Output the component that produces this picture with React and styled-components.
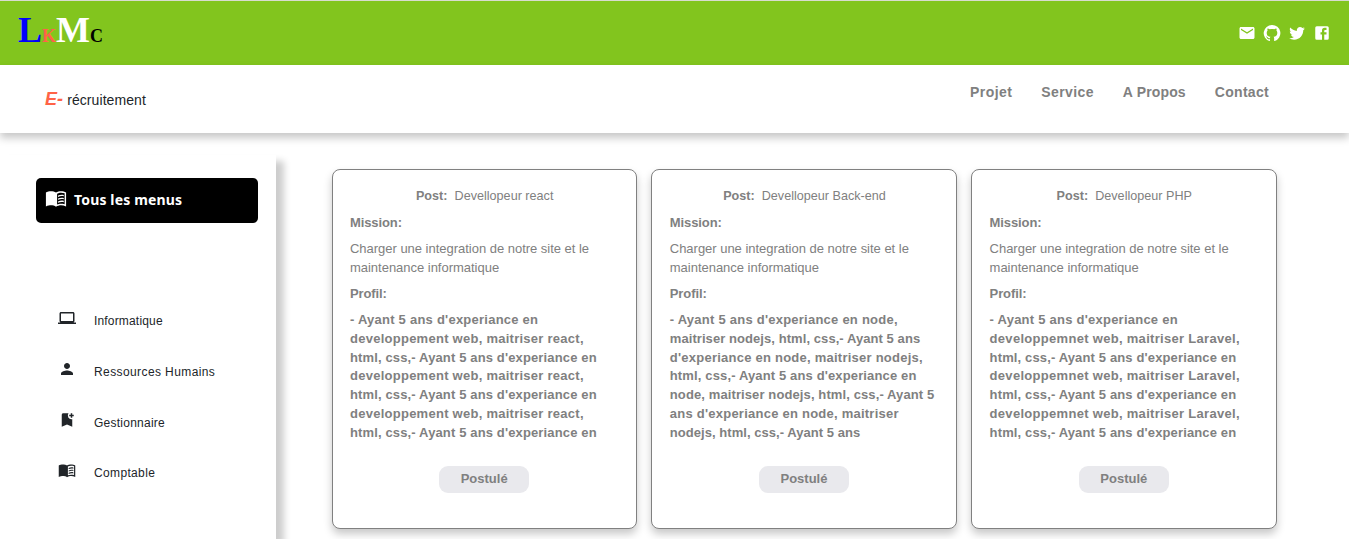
import React from "react";
import styled, { createGlobalStyle } from "styled-components";
import { MdEmail, MdLaptop, MdPerson, MdBookmarkAdd } from "react-icons/md";

const GlobalStyle = createGlobalStyle`
  * { box-sizing: border-box; }
  body {
    margin: 0;
    background: #fff;
    color: #212529;
    font-family: "Liberation Sans", Arial, sans-serif;
  }
`;

const TopBar = styled.div`
  height: 65px;
  border-top: 1px solid #d8dccf;
  background: #82c51e;
  display: flex;
  justify-content: space-between;
  padding: 0 18px;
`;

const Logo = styled.div`
  font-family: "Liberation Serif", "Times New Roman", serif;
  font-weight: 700;
  line-height: 40px;
  padding-top: 9px;
  white-space: nowrap;
`;

const LogoLetter = styled.span`
  font-size: ${(p) => p.$size}px;
  color: ${(p) => p.$color};
`;

const Socials = styled.div`
  display: flex;
  gap: 7px;
  padding-top: 23px;
  color: #fff;
  svg { width: 18px; height: 18px; display: block; fill: currentColor; }
`;

const NavBar = styled.header`
  height: 68px;
  background: #fff;
  box-shadow: 0 5px 8px rgba(0, 0, 0, 0.22);
  display: flex;
  justify-content: space-between;
  padding: 0 80px 0 45px;
`;

const Brand = styled.div`
  font-size: 14px;
  line-height: 24px;
  padding-top: 22px;
  letter-spacing: 0.08px;
`;

const BrandMark = styled.span`
  font-size: 18px;
  font-weight: 700;
  font-style: italic;
  color: tomato;
`;

const Links = styled.nav`
  display: flex;
  gap: 29px;
  padding-top: 17px;
`;

const NavLink = styled.a`
  font-size: 14px;
  line-height: 20px;
  font-weight: 700;
  color: #808080;
  letter-spacing: ${(p) => p.$spacing}px;
`;

const Body = styled.div`
  display: flex;
  align-items: flex-start;
  padding-top: 22px;
`;

const Sidebar = styled.aside`
  width: 276px;
  height: 384px;
  padding: 23px 18px 0 36px;
  background: #fff;
  box-shadow: 8px 6px 7px rgba(0, 0, 0, 0.2);
`;

const MenuButton = styled.div`
  height: 45px;
  border-radius: 5px;
  background: #000;
  color: #fff;
  display: flex;
  padding-left: 9px;
  font: 700 14px/20px "Noto Sans", "Open Sans", sans-serif;
  letter-spacing: 0.15px;
  svg { width: 22px; height: 22px; margin: 9px 7px 0 0; }
  span { padding-top: 12px; }
`;

const MenuList = styled.div`
  padding: 84px 0 0 22px;
`;

const MenuItem = styled.div`
  display: flex;
  height: 50.8px;
  font-size: 12px;
  line-height: 18px;
  letter-spacing: ${(p) => p.$spacing}px;
  svg { width: 18px; height: 18px; margin-right: 18px; margin-top: 2px; }
  span { padding-top: 5px; }
`;

const Cards = styled.main`
  display: flex;
  gap: 14px;
  padding: 14px 0 0 55.6px;
`;

const Card = styled.article`
  width: 305.8px;
  height: 360px;
  border: 1px solid #808080;
  border-radius: 8px;
  background: #fff;
  box-shadow: 0 5px 8px rgba(0, 0, 0, 0.22);
  padding: 17.4px 17px 0 17.4px;
  color: #808080;
  font-size: 13px;
  line-height: 18.8px;
  display: flex;
  flex-direction: column;
  gap: 7.4px;
`;

const Post = styled.div`
  text-align: center;
  white-space: pre;
  font-size: 12.6px;
  letter-spacing: 0.01px;
`;

const Label = styled.div`
  font-weight: 700;
  letter-spacing: -0.1px;
`;

const Mission = styled.div`
  letter-spacing: -0.02px;
  white-space: nowrap;
`;

const Profile = styled.div`
  font-weight: 700;
  white-space: nowrap;
`;

const ProfileLine = styled.div`
  letter-spacing: ${(p) => p.$spacing}px;
`;

const Apply = styled.div`
  align-self: center;
  width: 90px;
  height: 27px;
  margin-top: 16.4px;
  margin-right: 1px;
  border-radius: 9px;
  background: #e9e9ed;
  font-weight: 700;
  line-height: 25px;
  text-align: center;
`;

const GithubIcon = () => (
  <svg viewBox="0 0 24 24">
    <path d="M12 1.27a11 11 0 00-3.48 21.46c.55.09.73-.28.73-.55v-1.84c-3.03.64-3.67-1.46-3.67-1.46-.55-1.29-1.28-1.65-1.28-1.65-.92-.65.1-.65.1-.65 1.1 0 1.73 1.1 1.73 1.1.92 1.65 2.57 1.2 3.21.92a2 2 0 01.64-1.47c-2.47-.27-5.04-1.19-5.04-5.5 0-1.1.46-2.1 1.2-2.84a3.76 3.76 0 010-2.93s.91-.28 3.11 1.1c1.8-.49 3.7-.49 5.5 0 2.1-1.38 3.02-1.1 3.02-1.1a3.76 3.76 0 01.1 2.93c.83.74 1.2 1.74 1.2 2.94 0 4.21-2.57 5.13-5.04 5.4.45.37.82.92.82 2.02v3.03c0 .27.1.64.73.55A11 11 0 0012 1.27" />
  </svg>
);

const TwitterIcon = () => (
  <svg viewBox="0 0 24 24">
    <path d="M22.46 6c-.77.35-1.6.58-2.46.69.88-.53 1.56-1.37 1.88-2.38-.83.5-1.75.85-2.72 1.05C18.37 4.5 17.26 4 16 4c-2.35 0-4.27 1.92-4.27 4.29 0 .34.04.67.11.98C8.28 9.09 5.11 7.38 3 4.79c-.37.63-.58 1.37-.58 2.15 0 1.49.75 2.81 1.91 3.56-.71 0-1.37-.2-1.95-.5v.03c0 2.08 1.48 3.82 3.44 4.21a4.22 4.22 0 0 1-1.93.07 4.28 4.28 0 0 0 4 2.98 8.521 8.521 0 0 1-5.33 1.84c-.34 0-.68-.02-1.02-.06C3.44 20.29 5.7 21 8.12 21 16 21 20.33 14.46 20.33 8.79c0-.19 0-.37-.01-.56.84-.6 1.56-1.36 2.14-2.23z" />
  </svg>
);

const FacebookIcon = () => (
  <svg viewBox="0 0 24 24">
    <path d="M5 3h14a2 2 0 0 1 2 2v14a2 2 0 0 1-2 2H5a2 2 0 0 1-2-2V5a2 2 0 0 1 2-2m13 2h-2.5A3.5 3.5 0 0 0 12 8.5V11h-2v3h2v7h3v-7h3v-3h-3V9a1 1 0 0 1 1-1h2V5z" />
  </svg>
);

const BookIcon = () => (
  <svg viewBox="0 0 24 24" fill="currentColor">
    <path
      fillRule="evenodd"
      d="M17.5 4.5c-1.95 0-4.05.4-5.5 1.5-1.45-1.1-3.55-1.5-5.5-1.5S2.45 4.9 1 6v15.2C3.1 20.3 5.05 20 6.5 20c1.95 0 4.05.4 5.5 1.5 1.35-.85 3.8-1.5 5.5-1.5 1.65 0 3.75.4 5.5 1.2V6c-1.49-1.12-3.63-1.5-5.5-1.5zM21.4 18.7c-1.1-.35-2.7-.5-3.9-.5-1.5 0-3.2.4-4.3.9V7.4c1.2-.7 2.8-1.2 4.3-1.2 1.2 0 2.8.2 3.9.7v11.8z"
    />
    <path d="M14.2 9.3c2-.9 4.2-1.1 6.3-.6v1.5c-2.1-.5-4.3-.3-6.3.6zm0 3.2c2-.9 4.2-1.1 6.3-.6v1.5c-2.1-.5-4.3-.3-6.3.6zm0 3.2c2-.9 4.2-1.1 6.3-.6v1.5c-2.1-.5-4.3-.3-6.3.6z" />
  </svg>
);

const menus = [
  { label: "Informatique", Icon: MdLaptop, spacing: 0.17 },
  { label: "Ressources Humains", Icon: MdPerson, spacing: 0.4 },
  { label: "Gestionnaire", Icon: MdBookmarkAdd, spacing: 0.25 },
  { label: "Comptable", Icon: BookIcon, spacing: 0.35 },
];

// Each profile line is [text, letter spacing in px].
const reactLine = ["developpement web, maitriser react,", 0.26];
const phpLine = ["developpemnet web, maitriser Laravel,", 0.3];
const introLine = ["- Ayant 5 ans d'experiance en", 0.24];
const skillsLine = ["html, css,- Ayant 5 ans d'experiance en", 0.14];

const jobs = [
  {
    title: "Devellopeur react",
    profile: [introLine, reactLine, skillsLine, reactLine, skillsLine, reactLine, skillsLine],
  },
  {
    title: "Devellopeur Back-end",
    profile: [
      ["- Ayant 5 ans d'experiance en node,", 0.24],
      ["maitriser nodejs, html, css,- Ayant 5 ans", 0.07],
      ["d'experiance en node, maitriser nodejs,", 0.24],
      skillsLine,
      ["node, maitriser nodejs, html, css,- Ayant 5", 0.11],
      ["ans d'experiance en node, maitriser", 0.24],
      ["nodejs, html, css,- Ayant 5 ans", 0.05],
    ],
  },
  {
    title: "Devellopeur PHP",
    profile: [introLine, phpLine, skillsLine, phpLine, skillsLine, phpLine, skillsLine],
  },
];

export default function App() {
  return (
    <>
      <GlobalStyle />
      <TopBar>
        <Logo>
          <LogoLetter $size={36} $color="blue">L</LogoLetter>
          <LogoLetter $size={18} $color="tomato">K</LogoLetter>
          <LogoLetter $size={36} $color="#fff">M</LogoLetter>
          <LogoLetter $size={18} $color="#000">C</LogoLetter>
        </Logo>
        <Socials>
          <MdEmail />
          <GithubIcon />
          <TwitterIcon />
          <FacebookIcon />
        </Socials>
      </TopBar>
      <NavBar>
        <Brand>
          <BrandMark>E-</BrandMark> récruitement
        </Brand>
        <Links>
          <NavLink $spacing={0.42}>Projet</NavLink>
          <NavLink $spacing={0.4}>Service</NavLink>
          <NavLink $spacing={0.15}>A Propos</NavLink>
          <NavLink $spacing={0.3}>Contact</NavLink>
        </Links>
      </NavBar>
      <Body>
        <Sidebar>
          <MenuButton>
            <BookIcon />
            <span>Tous les menus</span>
          </MenuButton>
          <MenuList>
            {menus.map(({ label, Icon, spacing }) => (
              <MenuItem key={label} $spacing={spacing}>
                <Icon />
                <span>{label}</span>
              </MenuItem>
            ))}
          </MenuList>
        </Sidebar>
        <Cards>
          {jobs.map((job) => (
            <Card key={job.title}>
              <Post>
                <b>Post:</b>{"  "}{job.title}
              </Post>
              <Label>Mission:</Label>
              <Mission>
                Charger une integration de notre site et le<br />
                maintenance informatique
              </Mission>
              <Label>Profil:</Label>
              <Profile>
                {job.profile.map(([text, spacing], i) => (
                  <ProfileLine key={i} $spacing={spacing}>{text}</ProfileLine>
                ))}
              </Profile>
              <Apply>Postulé</Apply>
            </Card>
          ))}
        </Cards>
      </Body>
    </>
  );
}
